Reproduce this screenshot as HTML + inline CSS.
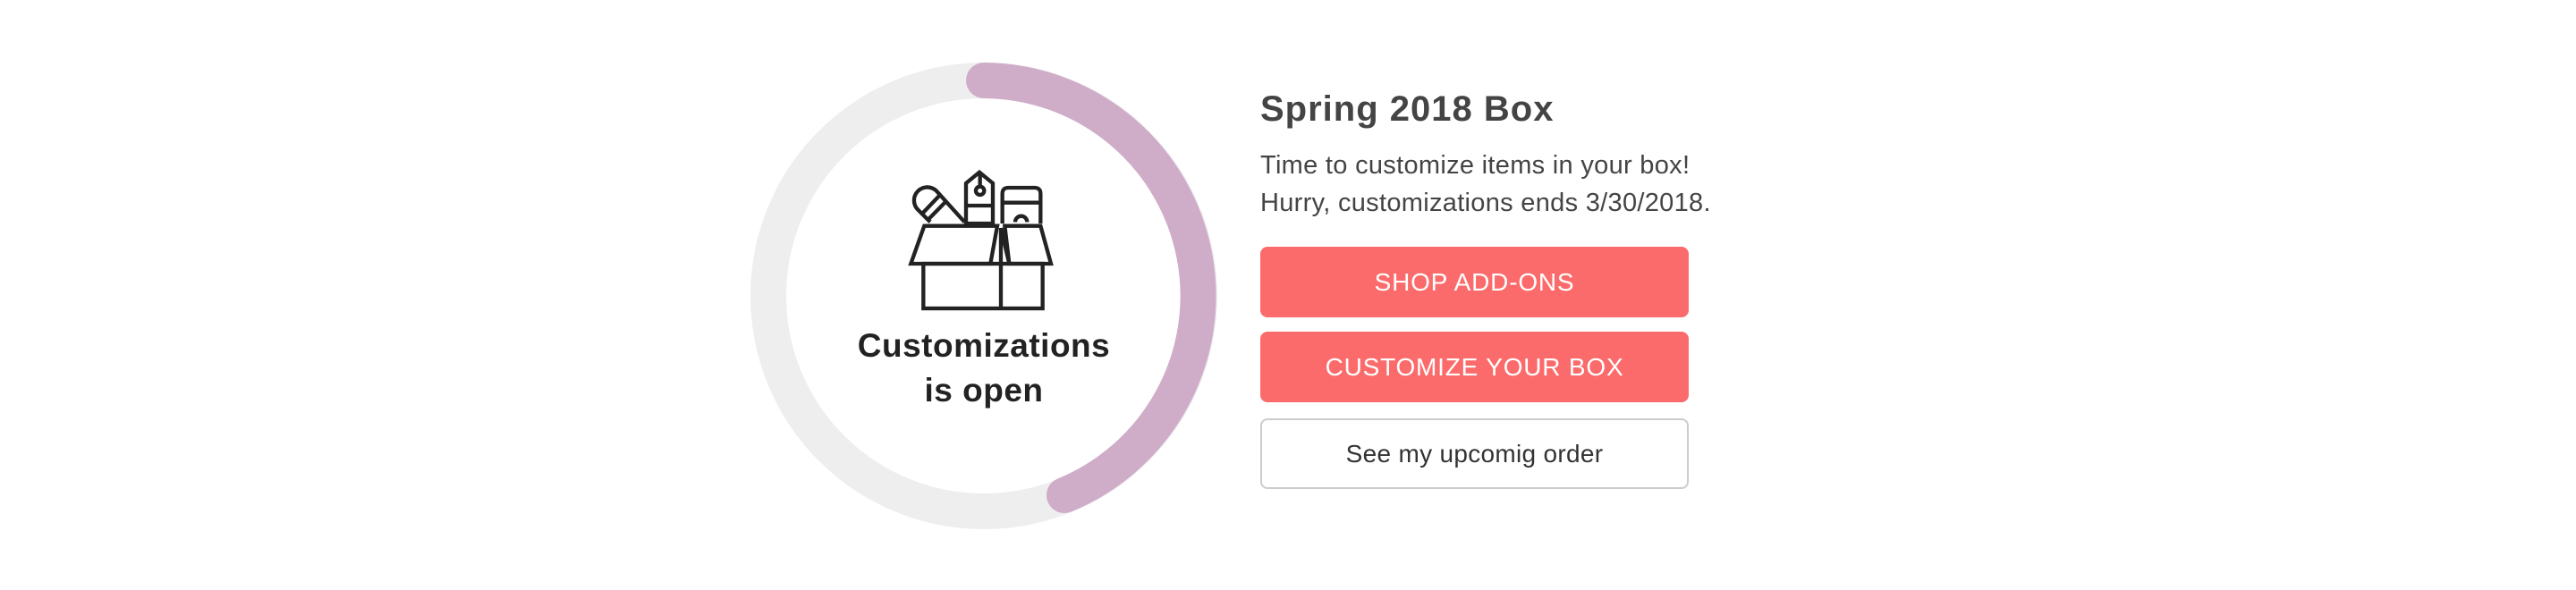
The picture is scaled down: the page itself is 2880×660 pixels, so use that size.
<!DOCTYPE html>
<html><head><meta charset="utf-8"><style>
html,body{margin:0;padding:0;background:#fff;width:2880px;height:660px;overflow:hidden;font-family:"Liberation Sans",sans-serif;}
.abs{position:absolute;}
.t1{left:900px;width:400px;text-align:center;font-weight:bold;font-size:37px;color:#222;line-height:50px;top:362px;letter-spacing:0.5px;}
.title{left:1409px;top:100px;font-size:40px;font-weight:bold;color:#444;white-space:nowrap;letter-spacing:1px;}
.body{left:1409px;top:164px;font-size:29px;color:#444;line-height:42px;white-space:nowrap;letter-spacing:0.3px;}
.btn{left:1409px;width:479px;height:79px;border-radius:8px;background:#fb6b6b;color:#fff;font-size:28px;display:flex;align-items:center;justify-content:center;box-sizing:border-box;letter-spacing:0.8px;}
.btn3{background:#fff;border:2px solid #ccc;color:#333;letter-spacing:0.3px;}
</style></head><body>
<svg class="abs" style="left:0;top:0" width="2880" height="660">
  <circle cx="1100" cy="331" r="241" fill="none" stroke="#eeeeee" stroke-width="40"/>
  <path d="M1100 90 A241 241 0 0 1 1190 554" fill="none" stroke="#cfadc8" stroke-width="40" stroke-linecap="round"/>
</svg>
<svg class="abs" style="left:1000px;top:180px" width="190" height="170" viewBox="0 0 570 510" fill="none" stroke="#222" stroke-width="13" stroke-linejoin="miter">
  <rect x="97" y="345" width="400" height="150"/>
  <line x1="357" y1="225" x2="357" y2="495"/>
  <polygon points="100,218 345,218 322,345 55,345"/>
  <polygon points="370,218 490,218 525,345 385,345"/>
  <line x1="357" y1="225" x2="385" y2="345"/>
  <polygon points="240,75 285,38 330,75 330,210 240,210"/>
  <line x1="240" y1="150" x2="330" y2="150"/>
  <circle cx="287" cy="100" r="14"/>
  <line x1="287" y1="45" x2="287" y2="86"/>
  <path d="M362,210 V110 Q362,90 382,90 H470 Q490,90 490,110 V210"/>
  <line x1="362" y1="140" x2="490" y2="140"/>
  <path d="M405,205 A20 20 0 1 1 445,205"/>
  <path d="M120,205 L80,165 A40 40 0 0 1 140,100 L235,205"/>
  <line x1="92" y1="178" x2="152" y2="115"/>
  <line x1="112" y1="198" x2="172" y2="137"/>
</svg>
<div class="abs t1">Customizations<br>is open</div>
<div class="abs title">Spring 2018 Box</div>
<div class="abs body">Time to customize items in your box!<br>Hurry, customizations ends 3/30/2018.</div>
<div class="abs btn" style="top:276px">SHOP ADD-ONS</div>
<div class="abs btn" style="top:371px">CUSTOMIZE YOUR BOX</div>
<div class="abs btn btn3" style="top:468px">See my upcomig order</div>
</body></html>
